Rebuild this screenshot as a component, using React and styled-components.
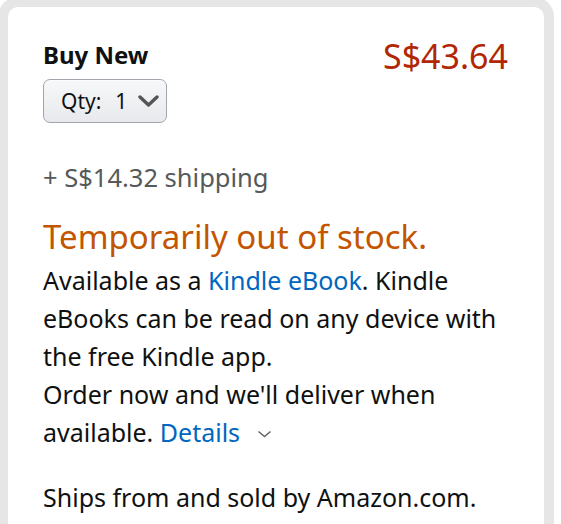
import React from "react";
import styled, { createGlobalStyle } from "styled-components";

const Global = createGlobalStyle`
  html, body { margin: 0; padding: 0; background: #fff; }
  body { font-family: "Noto Sans", "Open Sans", sans-serif; color: #0f1111; overflow: hidden; }
`;

const Page = styled.div`
  width: 561px;
  height: 524px;
  overflow: hidden;
  background: #fff;
`;

const Card = styled.div`
  box-sizing: border-box;
  margin: -3px 0 0 -2px;
  width: 556px;
  height: 560px;
  border: 10px solid #e6e6e6;
  border-radius: 20px;
  background: #fff;
  padding: 34px 36px 0 35px;
`;

const Header = styled.div`
  display: flex;
  justify-content: space-between;
  align-items: flex-start;
`;

const Left = styled.div`
  display: flex;
  flex-direction: column;
  align-items: flex-start;
`;

const Title = styled.div`
  font-size: 24px;
  line-height: 28px;
  font-weight: 700;
  color: #0f1111;
`;

const Price = styled.div`
  font-size: 34px;
  line-height: 30px;
  color: #b12704;
`;

const QtyButton = styled.button`
  margin-top: 10px;
  box-sizing: border-box;
  width: 124px;
  height: 44px;
  display: flex;
  align-items: center;
  gap: 11px;
  padding: 0 0 0 17px;
  border: 1px solid #a2a6ac;
  border-radius: 7px;
  background: linear-gradient(#f7f8fa, #e7e9ec);
  box-shadow: 0 1px 0 rgba(255,255,255,.6) inset;
  font-family: inherit;
  font-size: 21px;
  color: #0f1111;
`;

const QtyLabel = styled.span`
  display: flex;
  gap: 14px;
`;

const Shipping = styled.div`
  margin-top: 39px;
  font-size: 25.5px;
  line-height: 30px;
  color: #565959;
`;

const Stock = styled.div`
  margin-top: 26px;
  font-size: 33px;
  line-height: 38px;
  color: #c45500;
`;

const Para = styled.p`
  margin: ${(p) => p.$gap || 0}px 0 0;
  max-width: 466px;
  font-size: 25px;
  line-height: 38px;
  color: #0f1111;
`;

const Link = styled.a`
  color: #0066c0;
  text-decoration: none;
`;

const DetailsChevron = styled.svg`
  margin-left: 17px;
  vertical-align: 4px;
`;

function Chevron() {
  return (
    <svg width="21" height="12" viewBox="0 0 21 12">
      <polyline points="2,2 10.5,10 19,2" fill="none" stroke="#555" strokeWidth="3.4" strokeLinecap="round" strokeLinejoin="round" />
    </svg>
  );
}

export default function App() {
  return (
    <Page>
      <Global />
      <Card>
        <Header>
          <Left>
            <Title>Buy New</Title>
            <QtyButton>
              <QtyLabel>
                <span>Qty:</span>
                <span>1</span>
              </QtyLabel>
              <Chevron />
            </QtyButton>
          </Left>
          <Price>S$43.64</Price>
        </Header>
        <Shipping>+ S$14.32 shipping</Shipping>
        <Stock>Temporarily out of stock.</Stock>
        <Para $gap={5}>
          Available as a <Link href="#">Kindle eBook</Link>. Kindle eBooks can be read on any device with the free Kindle app.
          <br />
          Order now and we'll deliver when available. <Link href="#">Details</Link>
          <DetailsChevron width="15" height="8" viewBox="0 0 15 8">
            <polyline points="1.5,1.5 7.5,6.5 13.5,1.5" fill="none" stroke="#666" strokeWidth="1.6" />
          </DetailsChevron>
        </Para>
        <Para $gap={27}>Ships from and sold by Amazon.com.</Para>
      </Card>
    </Page>
  );
}
